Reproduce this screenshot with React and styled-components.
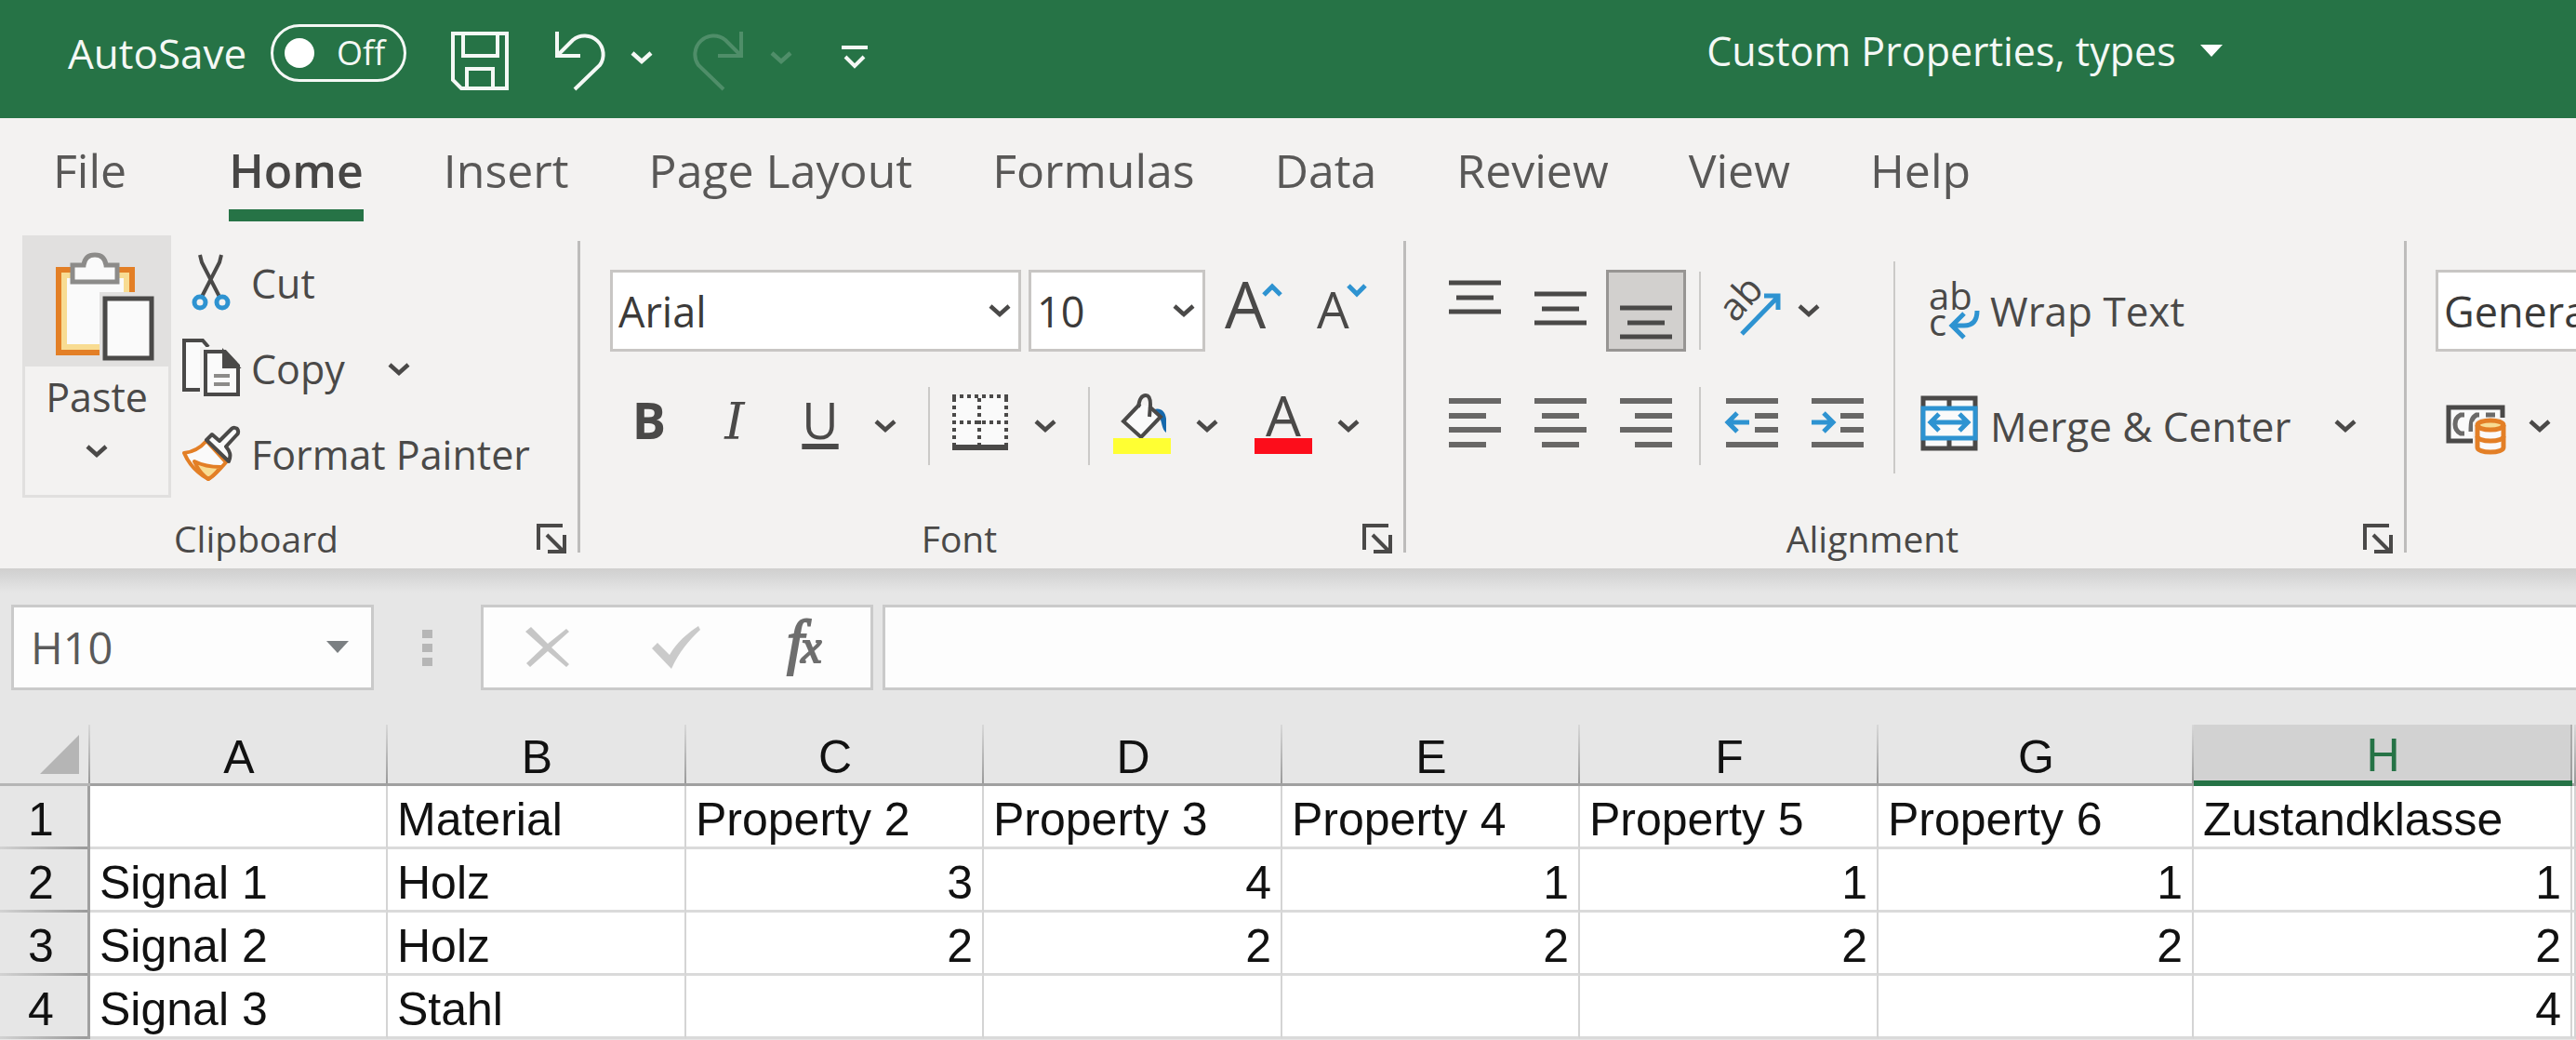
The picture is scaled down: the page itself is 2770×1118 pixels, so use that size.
import React, { useState } from "react";
import styled, { createGlobalStyle, css } from "styled-components";

const UI_FONT = '"Open Sans", "Noto Sans", sans-serif';
const CELL_FONT = '"Liberation Sans", Arial, sans-serif';
const INK = "#4a4948";
const BLUE = "#2e93d1";
const ORANGE = "#e37f26";

const GlobalStyle = createGlobalStyle`
  *, *::before, *::after { box-sizing: border-box; }
  body {
    margin: 0;
    background: #e6e6e6;
    color: ${INK};
    font-family: ${UI_FONT};
    overflow: hidden;
  }
  button, input, select { font: inherit; color: inherit; margin: 0; }
  svg { display: block; flex: none; overflow: visible; }
`;

const reset = css`
  border: 0;
  padding: 0;
  background: none;
  cursor: pointer;
`;

/* ---------- title bar ---------- */

const TitleBar = styled.header`
  display: flex;
  align-items: center;
  height: 127px;
  padding: 0 0 14px 73px;
  background: #267346;
  color: #f4f8f5;
  font-size: 44px;
  line-height: 60px;
  white-space: nowrap;
`;

const AutoSave = styled.label`
  display: flex;
  align-items: center;
  gap: 26px;
  margin-right: 48px;
`;

const Switch = styled.span`
  display: flex;
  align-items: center;
  justify-content: space-between;
  width: 146px;
  height: 62px;
  padding: 0 20px 0 12px;
  border: 3px solid #f4f8f5;
  border-radius: 31px;
  font-size: 36px;
`;

const SwitchKnob = styled.input`
  appearance: none;
  width: 32px;
  height: 32px;
  border-radius: 50%;
  background: #fff;
`;

const TitleButton = styled.button`
  ${reset}
  display: flex;
  justify-content: center;
  margin-right: ${(p) => p.$after || 0}px;
  min-width: ${(p) => p.$width || 0}px;
  padding-top: ${(p) => (p.$width ? 10 : 18)}px;
  opacity: ${(p) => (p.disabled ? 0.2 : 1)};
`;

const FileName = styled.button`
  ${reset}
  display: flex;
  align-items: center;
  gap: 26px;
  margin-left: 892px;
  padding-bottom: 4px;
  font-size: 43px;
`;

/* ---------- tabs ---------- */

const Tabs = styled.nav`
  display: flex;
  gap: 86px;
  padding: 15px 57px;
  background: #f3f2f1;
`;

const Tab = styled.a`
  height: 96px;
  border-bottom: 13px solid ${(p) => (p.$active ? "#267346" : "transparent")};
  color: ${(p) => (p.$active ? "#474645" : "#595857")};
  font-size: 50px;
  font-weight: ${(p) => (p.$active ? 600 : 400)};
  line-height: 83px;
  text-decoration: none;
  white-space: nowrap;
  &:first-child { margin-right: 24px; }
`;

/* ---------- ribbon ---------- */

const Ribbon = styled.section`
  display: flex;
  padding-bottom: 8px;
  background: #f3f2f1;
  overflow: hidden;
`;

const Group = styled.section`
  display: flex;
  flex: none;
  flex-direction: column;
  min-width: ${(p) => p.$min}px;
`;

const GroupBody = styled.div`
  display: flex;
  height: 302px;
  padding-left: ${(p) => p.$left}px;
`;

const GroupFooter = styled.footer`
  display: flex;
  align-items: center;
  height: 48px;
`;

const GroupLabel = styled.h2`
  flex: 1;
  margin: 0;
  font-size: 39px;
  font-weight: 400;
  line-height: 48px;
  text-align: center;
`;

const Launcher = styled.button`
  ${reset}
  width: 70px;
  padding-left: 26px;
`;

const GroupDivider = styled.div`
  flex: none;
  width: 3px;
  margin: 6px 0 9px;
  background: #bdbcbb;
`;

const Divider = styled.div`
  flex: none;
  width: 2px;
  height: ${(p) => (p.$tall ? 228 : 84)}px;
  margin: ${(p) => (p.$tall ? "28px 28px 0 17px" : `0 ${p.$after}px 0 ${p.$before}px`)};
  background: #cbcac8;
`;

const Rows = styled.div`
  display: flex;
  flex-direction: column;
  gap: 38px;
  padding-top: 37px;
`;

const Row = styled.div`
  display: flex;
  align-items: center;
  gap: ${(p) => p.$gap || 0}px;
  height: ${(p) => p.$height}px;
  padding-left: ${(p) => p.$inset || 0}px;
`;

const PasteButton = styled.button`
  ${reset}
  display: flex;
  flex-direction: column;
  align-items: center;
  width: 160px;
  height: 282px;
  margin-right: 12px;
  border: 3px solid #e1e0df;
  font-size: 43px;
  line-height: 56px;
`;

const PastePicture = styled.span`
  display: flex;
  align-self: stretch;
  height: 138px;
  margin-bottom: 5px;
  padding: 16px 0 0 33px;
  background: #e1e0df;
`;

const PasteArrow = styled.span`
  display: flex;
  padding-top: 22px;
`;

const Commands = styled.div`
  display: flex;
  flex-direction: column;
  padding-top: 6px;
`;

const CommandLine = styled.div`
  display: flex;
  align-items: center;
  height: ${(p) => p.$height}px;
`;

const Command = styled.button`
  ${reset}
  display: flex;
  align-items: center;
  gap: 12px;
  font-size: ${(p) => (p.$large ? 44 : 43)}px;
  line-height: 56px;
  white-space: nowrap;
`;

const ArrowButton = styled.button`
  ${reset}
  display: flex;
  justify-content: center;
  flex: none;
  width: 48px;
  margin-left: ${(p) => p.$before || 0}px;
  margin-right: ${(p) => p.$after || 0}px;
`;

const ToolButton = styled.button`
  ${reset}
  display: flex;
  flex: none;
  align-items: center;
  justify-content: center;
  width: ${(p) => p.$width}px;
  height: 88px;
  border: 3px solid ${(p) => (p.$pressed ? "#979593" : "transparent")};
  background: ${(p) => (p.$pressed ? "#d2d0ce" : "none")};
`;

const Letter = styled.span`
  padding-bottom: ${(p) => (p.$kind === "italic" ? 8 : 14)}px;
  font-size: 54px;
  line-height: 70px;
  font-family: ${(p) => (p.$kind === "italic" ? '"DejaVu Serif", serif' : "inherit")};
  font-style: ${(p) => (p.$kind === "italic" ? "italic" : "normal")};
  font-weight: ${(p) => (p.$kind === "bold" ? 700 : 400)};
  text-decoration: ${(p) => (p.$kind === "underline" ? "underline 6px" : "none")};
  text-underline-offset: 5px;
  text-decoration-skip-ink: none;
`;

const SelectFrame = styled.label`
  display: grid;
  flex: none;
  align-items: center;
  width: ${(p) => p.$width}px;
  height: 88px;
  border: 3px solid #c8c6c4;
  background: #fff;
  > * { grid-area: 1 / 1; }
  > svg { justify-self: end; margin-right: 8px; pointer-events: none; }
`;

const Select = styled.select`
  appearance: none;
  width: 100%;
  height: 100%;
  padding: 0 0 0 6px;
  border: 0;
  background: none;
  color: #3b3a39;
  font-size: 45px;
`;

/* ---------- formula bar ---------- */

const FormulaBar = styled.section`
  display: flex;
  align-items: center;
  padding: 39px 0 37px 12px;
  background: linear-gradient(#d0cfce, #d4d4d4 6px, #e6e6e6 26px);
`;

const Box = styled.div`
  display: flex;
  flex: none;
  align-items: center;
  width: ${(p) => p.$width}px;
  height: 92px;
  border: 3px solid #cacaca;
  background: #fdfdfd;
`;

const FormulaBox = styled(Box)`
  flex: 1;
  margin-left: 10px;
  border-right: 0;
`;

const TextInput = styled.input`
  flex: 1;
  min-width: 0;
  height: 100%;
  padding: 0 16px 0 18px;
  border: 0;
  outline: 0;
  background: none;
  color: #5a5a5a;
  font-size: 47px;
`;

const BoxButton = styled.button`
  ${reset}
  display: flex;
  justify-content: center;
  width: ${(p) => p.$width}px;
`;

const Grip = styled.div`
  display: grid;
  gap: 6px;
  margin: 0 52px;
  i { width: 11px; height: 9px; background: #b6b6b6; }
`;

/* ---------- sheet ---------- */

const Sheet = styled.table`
  width: 100%;
  table-layout: fixed;
  border-collapse: separate;
  border-spacing: 0;
  background: #fff;
  color: #111;
  font-family: ${CELL_FONT};
  font-size: 50px;
  line-height: 56px;
`;

const ColumnHead = styled.th`
  height: 66px;
  padding: 6px 0 0;
  border-bottom: ${(p) => (p.$selected ? "6px solid #267346" : "3px solid #a0a0a0")};
  background:
    linear-gradient(${(p) => (p.$selected ? "#b0b0b0" : "#d8d8d8")}, #9a9a9a) right / 2px 100% no-repeat
    ${(p) => (p.$selected ? "#d2d2d2" : "#e6e6e6")};
  color: ${(p) => (p.$selected ? "#267346" : "#111")};
  font-weight: 400;
  line-height: 54px;
`;

const Corner = styled.td`
  height: 66px;
  padding: 0 12px 0 0;
  border-bottom: 3px solid #b5b5b5;
  background: linear-gradient(#d8d8d8, #9a9a9a) right / 2px 100% no-repeat #e6e6e6;
  svg { margin-left: auto; }
`;

const RowHead = styled.th`
  height: 68px;
  padding: 4px 6px 0 0;
  border-right: 3px solid #a0a0a0;
  background: linear-gradient(to right, #d2d2d2, #9a9a9a) bottom / 100% 3px no-repeat #e6e6e6;
  font-weight: 400;
`;

const Cell = styled.td`
  height: 68px;
  padding: 6px 10px 0;
  border-right: 2px solid #d4d4d4;
  border-bottom: 3px solid #dadada;
  text-align: ${(p) => (p.$numeric ? "right" : "left")};
  white-space: nowrap;
  overflow: hidden;
`;

/* ---------- drawings ---------- */

const Chevron = ({ color = INK }) => (
  <svg width="24" height="16" viewBox="0 0 24 16" fill="none" stroke={color} strokeWidth="4.5">
    <path d="M2 3l10 9 10-9" />
  </svg>
);

const Triangle = ({ color }) => (
  <svg width="24" height="14" viewBox="0 0 24 14"><path d="M0 0h24L12 13z" fill={color} /></svg>
);

const SaveIcon = () => (
  <svg width="62" height="63" viewBox="0 0 62 63" fill="none" stroke="#f4f8f5" strokeWidth="4">
    <path d="M2 2h58v59H11l-9-9zM13 2v24h37V2M17 61V40h28v21" />
  </svg>
);

const UndoIcon = () => (
  <svg width="56" height="63" viewBox="0 0 56 63" fill="none" stroke="#f4f8f5" strokeWidth="4">
    <path d="M4 0v26h25M4 26L21 9A20 20 0 0 1 50 36L23 62" />
  </svg>
);

const RedoIcon = () => (
  <svg width="56" height="63" viewBox="0 0 56 63" fill="none" stroke="#f4f8f5" strokeWidth="4">
    <path d="M52 0v26H27M52 26L35 9A20 20 0 0 0 6 36L33 62" />
  </svg>
);

const MoreIcon = () => (
  <svg width="28" height="26" viewBox="0 0 28 26" fill="none" stroke="#f4f8f5" strokeWidth="4">
    <path d="M0 2h28M4 12l10 10 10-10" />
  </svg>
);

const PasteIcon = () => (
  <svg width="106" height="116" viewBox="0 0 106 116">
    <path d="M3 18h79v89H3z" fill="#fafafa" stroke={ORANGE} strokeWidth="6" />
    <path d="M9 24h67v77H9z" fill="none" stroke="#f8dc92" strokeWidth="6" />
    <path d="M18 13h12C31 5 36 2 42 2s11 3 12 11h12v18H18z" fill="#fafafa" stroke="#8c8b89" strokeWidth="5" />
    <path d="M47 42h59v74H47z" fill="#e1e0df" />
    <path d="M53 49h50v64H53z" fill="#fafafa" stroke={INK} strokeWidth="5" />
  </svg>
);

const CutIcon = () => (
  <svg width="62" height="62" viewBox="0 0 62 62" fill="none">
    <path d="M19 0l2 8 19 37M42 0l-2 8-19 37" stroke={INK} strokeWidth="4" />
    <circle cx="19" cy="51" r="6" stroke={BLUE} strokeWidth="5" />
    <circle cx="43" cy="51" r="6" stroke={BLUE} strokeWidth="5" />
  </svg>
);

const CopyIcon = () => (
  <svg width="62" height="66" viewBox="0 0 62 66" fill="none" stroke={INK} strokeWidth="4">
    <path d="M19 55H2V2h20l6 7" fill="#fafafa" />
    <path d="M19 9h12v50H19z" fill="#f3f2f1" stroke="none" />
    <path d="M25 14h21l14 15v31H25z" fill="#fafafa" />
    <path d="M45 15v15h14z" fill={INK} />
    <path d="M34 40h17M34 49h17" stroke="#8c8b89" />
  </svg>
);

const PainterIcon = () => (
  <svg width="62" height="62" viewBox="0 0 62 62" strokeWidth="4" strokeLinejoin="round">
    <path d="M26 16C19 24 11 28 2 29c6 14 15 22 26 28 7-4 13-11 19-18z" fill="#fafafa" stroke={ORANGE} />
    <path d="M13 38c8 4 18 6 28 6-4 6-8 10-13 13-6-4-11-10-15-19z" fill="#f8dc92" stroke={ORANGE} />
    <path d="M26 15l6-6 8 7L53 3c2-2 5-1 6 0s2 4 0 6L47 22c4 5 6 9 3 16z" fill="#fafafa" stroke={INK} />
  </svg>
);

const GrowIcon = () => (
  <svg width="64" height="64" viewBox="0 0 64 64">
    <text x="1" y="51" fontSize="70" fill={INK}>A</text>
    <path d="M43 15l9-9 9 9" fill="none" stroke={BLUE} strokeWidth="5" />
  </svg>
);

const ShrinkIcon = () => (
  <svg width="64" height="64" viewBox="0 0 64 64">
    <text x="4" y="51" fontSize="55" fill={INK}>A</text>
    <path d="M38 5l9 9 9-9" fill="none" stroke={BLUE} strokeWidth="5" />
  </svg>
);

const BordersIcon = () => (
  <svg width="64" height="64" viewBox="0 0 64 64" fill="none" stroke={INK}>
    <path d="M2 0h58v56H2z" fill="#fafafa" stroke="none" />
    <path d="M2 0h60M2 28h60" strokeWidth="4" strokeDasharray="4 4" />
    <path d="M4 2v50M31 2v50M60 2v50" strokeWidth="4" strokeDasharray="4 4" />
    <path d="M2 55h60" strokeWidth="6" />
  </svg>
);

const FillIcon = () => (
  <svg width="62" height="64" viewBox="0 0 62 64" fill="none">
    <path d="M44 14c7-2 12 2 13 10v15c-5-4-4-10-7-16z" fill="#1569ad" />
    <path d="M29 8L11 27l19 17 21-22L39 11" fill="#fafafa" stroke={INK} strokeWidth="4" />
    <path d="M27 12c1-9 4-13 8-13s5 4 5 10l-1 13" stroke={INK} strokeWidth="4" />
    <path d="M0 45h62v17H0z" fill="#ffff33" />
  </svg>
);

const FontColorIcon = () => (
  <svg width="62" height="64" viewBox="0 0 62 64">
    <text x="12" y="43" fontSize="60" fill={INK}>A</text>
    <path d="M0 45h62v17H0z" fill="#fc0d1b" />
  </svg>
);

const LinesIcon = ({ lines, width = 5, color = INK }) => (
  <svg width="56" height="64" viewBox="0 0 56 64" stroke={color} strokeWidth={width}>
    {lines.map(([x1, x2, y]) => <path key={y} d={`M${x1} ${y}H${x2}`} />)}
  </svg>
);

const verticalLines = (y) => [[0, 56, y], [8, 48, y + 16], [0, 56, y + 31]];
const horizontalLines = (a, b) => [[0, 56, 5], [a, b, 21], [0, 56, 36], [a, b, 52]];

const IndentIcon = ({ out }) => (
  <svg width="56" height="64" viewBox="0 0 56 64" fill="none" stroke="#686766" strokeWidth="6">
    <path d="M0 5h56M31 21h25M31 36h25M0 52h56" />
    <path d={out ? "M25 28H3M12 18L2 28l10 10" : "M0 28h22M13 18l10 10-10 10"} stroke={BLUE} strokeWidth="5" />
  </svg>
);

const OrientationIcon = () => (
  <svg width="68" height="64" viewBox="0 0 68 64">
    <text x="19" y="46" fontSize="41" fill={INK} transform="rotate(-48 19 46)">ab</text>
    <path d="M26 57l38-39M50 16h15v15" fill="none" stroke={BLUE} strokeWidth="5" />
  </svg>
);

const WrapIcon = () => (
  <svg width="62" height="64" viewBox="0 0 62 64">
    <text fontSize="40" fill={INK}>
      <tspan x="8" y="31">ab</tspan>
      <tspan x="8" y="59">c</tspan>
    </text>
    <path d="M46 35L33 48l13 13M34 48h12c10 0 14-6 14-16" fill="none" stroke={BLUE} strokeWidth="5" />
  </svg>
);

const MergeIcon = () => (
  <svg width="62" height="64" viewBox="0 0 62 64" fill="none">
    <path d="M2 2h56v54H2zM30 2v54" fill="#fafafa" stroke={INK} strokeWidth="5" />
    <path d="M2 13h56v32H2z" fill="#fafafa" stroke={BLUE} strokeWidth="5" />
    <path d="M10 28h40M19 19l-9 9 9 9M41 19l9 9-9 9" stroke={BLUE} strokeWidth="5" />
  </svg>
);

const AccountingIcon = () => (
  <svg width="64" height="64" viewBox="0 0 64 64" fill="none">
    <path d="M2 12h58v36H2z" fill="#fafafa" stroke={INK} strokeWidth="5" />
    <path d="M19 20h-4c-4 2-6 5-6 10s2 8 6 10h4M35 20h-3c-5 3-6 6-6 18M42 20h10" stroke="#6b6a69" strokeWidth="5" />
    <path d="M28 28c4-4 9-5 18-5h18v40H28z" fill="#f3f2f1" />
    <path d="M33 31v24c0 3 6 5 14 5s14-2 14-5V31" fill="#fafafa" stroke={ORANGE} strokeWidth="5" />
    <path d="M33 43c0 3 6 5 14 5s14-2 14-5" stroke={ORANGE} strokeWidth="5" />
    <ellipse cx="47" cy="31" rx="14" ry="5" fill="#f8dc92" stroke={ORANGE} strokeWidth="5" />
  </svg>
);

const LauncherIcon = () => (
  <svg width="32" height="32" viewBox="0 0 32 32" fill="none" stroke={INK} strokeWidth="4">
    <path d="M2 28V2h26M11 12l17 17M30 12v18H12" />
  </svg>
);

const CancelIcon = () => (
  <svg width="48" height="44" viewBox="0 0 48 44" fill="#c6c6c6">
    <path d="M0 5l6-5 18 18L44 2l3 3-19 17 19 18-3 3-20-17L5 43l-4-4 18-17z" />
  </svg>
);

const EnterIcon = () => (
  <svg width="52" height="46" viewBox="0 0 52 46" fill="#cacaca">
    <path d="M0 24l6-6 13 13C27 17 38 8 50 0l2 4C40 15 29 28 21 46z" />
  </svg>
);

const FunctionIcon = () => (
  <svg width="60" height="62" viewBox="0 0 60 62" fill="#6e6e6e" fontFamily='"Liberation Serif", serif' fontStyle="italic">
    <text x="11" y="47" fontSize="66" stroke="#6e6e6e" strokeWidth="2">f<tspan fontSize="50" dx="-3">x</tspan></text>
  </svg>
);

const CornerIcon = () => (
  <svg width="42" height="42" viewBox="0 0 42 42"><path d="M42 0v42H0z" fill="#b5b5b5" /></svg>
);

/* ---------- data ---------- */

const TABS = ["File", "Home", "Insert", "Page Layout", "Formulas", "Data", "Review", "View", "Help"];
const COLUMNS = [["A", 320], ["B", 321], ["C", 320], ["D", 321], ["E", 320], ["F", 321], ["G", 339], ["H", 407]];
const ROWS = [
  ["", "Material", "Property 2", "Property 3", "Property 4", "Property 5", "Property 6", "Zustandklasse"],
  ["Signal 1", "Holz", 3, 4, 1, 1, 1, 1],
  ["Signal 2", "Holz", 2, 2, 2, 2, 2, 2],
  ["Signal 3", "Stahl", "", "", "", "", "", 4],
];

const Arrow = ({ label, before, after }) => (
  <ArrowButton aria-label={label} $before={before} $after={after}><Chevron /></ArrowButton>
);

const Footer = ({ children }) => (
  <GroupFooter>
    <GroupLabel>{children}</GroupLabel>
    <Launcher aria-label={`${children} settings`}><LauncherIcon /></Launcher>
  </GroupFooter>
);

const Dropdown = ({ label, width, value }) => (
  <SelectFrame $width={width}>
    <Select aria-label={label} defaultValue={value}><option>{value}</option></Select>
    <Chevron />
  </SelectFrame>
);

export default function App() {
  const [autoSave, setAutoSave] = useState(false);
  const [active, setActive] = useState("Home");

  return (
    <>
      <GlobalStyle />
      <TitleBar>
        <AutoSave>
          AutoSave
          <Switch>
            <SwitchKnob type="checkbox" role="switch" checked={autoSave} onChange={(e) => setAutoSave(e.target.checked)} />
            {autoSave ? "On" : "Off"}
          </Switch>
        </AutoSave>
        <TitleButton aria-label="Save" $after={48}><SaveIcon /></TitleButton>
        <TitleButton aria-label="Undo" $after={15}><UndoIcon /></TitleButton>
        <TitleButton aria-label="Undo list" $width={48} $after={31}><Chevron color="#f4f8f5" /></TitleButton>
        <TitleButton aria-label="Redo" disabled $after={15}><RedoIcon /></TitleButton>
        <TitleButton aria-label="Redo list" disabled $width={48} $after={31}><Chevron color="#f4f8f5" /></TitleButton>
        <TitleButton aria-label="Customize toolbar" $width={48}><MoreIcon /></TitleButton>
        <FileName>Custom Properties, types<Triangle color="#fff" /></FileName>
      </TitleBar>

      <Tabs aria-label="Ribbon tabs">
        {TABS.map((tab) => (
          <Tab key={tab} href="#" $active={tab === active} onClick={() => setActive(tab)}>{tab}</Tab>
        ))}
      </Tabs>

      <Ribbon>
        <Group $min={621}>
          <GroupBody $left={24}>
            <PasteButton>
              <PastePicture><PasteIcon /></PastePicture>
              Paste
              <PasteArrow><Chevron /></PasteArrow>
            </PasteButton>
            <Commands>
              <CommandLine $height={92}><Command><CutIcon />Cut</Command></CommandLine>
              <CommandLine $height={92}>
                <Command><CopyIcon />Copy</Command>
                <Arrow label="Copy options" before={34} />
              </CommandLine>
              <CommandLine $height={92}><Command><PainterIcon />Format Painter</Command></CommandLine>
            </Commands>
          </GroupBody>
          <Footer>Clipboard</Footer>
        </Group>
        <GroupDivider />

        <Group $min={885}>
          <GroupBody $left={28}>
            <Rows>
              <Row $height={88} $gap={8} $inset={4}>
                <Dropdown label="Font name" width={442} value="Arial" />
                <Dropdown label="Font size" width={190} value="10" />
                <ToolButton $width={88} aria-label="Increase font size"><GrowIcon /></ToolButton>
                <ToolButton $width={88} aria-label="Decrease font size"><ShrinkIcon /></ToolButton>
              </Row>
              <Row $height={84}>
                <ToolButton $width={92}><Letter $kind="bold">B</Letter></ToolButton>
                <ToolButton $width={92}><Letter $kind="italic">I</Letter></ToolButton>
                <ToolButton $width={92}><Letter $kind="underline">U</Letter></ToolButton>
                <Arrow label="Underline options" />
                <Divider $before={22} $after={8} />
                <ToolButton $width={92} aria-label="Borders"><BordersIcon /></ToolButton>
                <Arrow label="Border options" />
                <Divider $before={22} $after={10} />
                <ToolButton $width={92} aria-label="Fill color"><FillIcon /></ToolButton>
                <Arrow label="Fill color options" after={12} />
                <ToolButton $width={92} aria-label="Font color"><FontColorIcon /></ToolButton>
                <Arrow label="Font color options" />
              </Row>
            </Rows>
          </GroupBody>
          <Footer>Font</Footer>
        </Group>
        <GroupDivider />

        <Group $min={1073}>
          <GroupBody $left={31}>
            <Rows>
              <Row $height={88}>
                <Row $height={88} $gap={6}>
                  <ToolButton $width={86} aria-label="Top align"><LinesIcon lines={verticalLines(2)} /></ToolButton>
                  <ToolButton $width={86} aria-label="Middle align"><LinesIcon lines={verticalLines(14)} /></ToolButton>
                  <ToolButton $width={86} $pressed aria-label="Bottom align" aria-pressed="true"><LinesIcon lines={verticalLines(29)} /></ToolButton>
                </Row>
                <Divider $before={14} $after={12} />
                <ToolButton $width={80} aria-label="Orientation"><OrientationIcon /></ToolButton>
                <Arrow label="Orientation options" />
              </Row>
              <Row $height={84}>
                <Row $height={84} $gap={6}>
                  <ToolButton $width={86} aria-label="Align left"><LinesIcon width={6} color="#686766" lines={horizontalLines(0, 40)} /></ToolButton>
                  <ToolButton $width={86} aria-label="Center"><LinesIcon width={6} color="#686766" lines={horizontalLines(8, 48)} /></ToolButton>
                  <ToolButton $width={86} aria-label="Align right"><LinesIcon width={6} color="#686766" lines={horizontalLines(16, 56)} /></ToolButton>
                </Row>
                <Divider $before={14} $after={12} />
                <Row $height={84} $gap={6}>
                  <ToolButton $width={86} aria-label="Decrease indent"><IndentIcon out /></ToolButton>
                  <ToolButton $width={86} aria-label="Increase indent"><IndentIcon /></ToolButton>
                </Row>
              </Row>
            </Rows>
            <Divider $tall />
            <Rows>
              <CommandLine $height={88}><Command $large><WrapIcon />Wrap Text</Command></CommandLine>
              <CommandLine $height={84}>
                <Command $large><MergeIcon />Merge &amp; Center</Command>
                <Arrow label="Merge options" before={34} />
              </CommandLine>
            </Rows>
          </GroupBody>
          <Footer>Alignment</Footer>
        </Group>
        <GroupDivider />

        <Group $min={460}>
          <GroupBody $left={31}>
            <Rows>
              <Row $height={88}><Dropdown label="Number format" width={420} value="General" /></Row>
              <Row $height={84}>
                <ToolButton $width={88} aria-label="Accounting format"><AccountingIcon /></ToolButton>
                <Arrow label="Accounting options" />
              </Row>
            </Rows>
          </GroupBody>
        </Group>
      </Ribbon>

      <FormulaBar>
        <Box $width={390}>
          <TextInput aria-label="Name box" defaultValue="H10" />
          <BoxButton $width={72} aria-label="Name list"><Triangle color="#7b7f82" /></BoxButton>
        </Box>
        <Grip><i /><i /><i /></Grip>
        <Box $width={422}>
          <BoxButton $width={138} aria-label="Cancel"><CancelIcon /></BoxButton>
          <BoxButton $width={138} aria-label="Enter"><EnterIcon /></BoxButton>
          <BoxButton $width={138} aria-label="Insert function"><FunctionIcon /></BoxButton>
        </Box>
        <FormulaBox>
          <TextInput aria-label="Formula" />
        </FormulaBox>
      </FormulaBar>

      <Sheet>
        <colgroup>
          <col width="97" />
          {COLUMNS.map(([name, width]) => <col key={name} width={width} />)}
          <col />
        </colgroup>
        <thead>
          <tr>
            <Corner><CornerIcon /></Corner>
            {COLUMNS.map(([name]) => <ColumnHead key={name} scope="col" $selected={name === "H"}>{name}</ColumnHead>)}
            <ColumnHead as="td" />
          </tr>
        </thead>
        <tbody>
          {ROWS.map((row, r) => (
            <tr key={r}>
              <RowHead scope="row">{r + 1}</RowHead>
              {row.map((value, c) => <Cell key={c} $numeric={typeof value === "number"}>{value}</Cell>)}
              <Cell />
            </tr>
          ))}
        </tbody>
      </Sheet>
    </>
  );
}
